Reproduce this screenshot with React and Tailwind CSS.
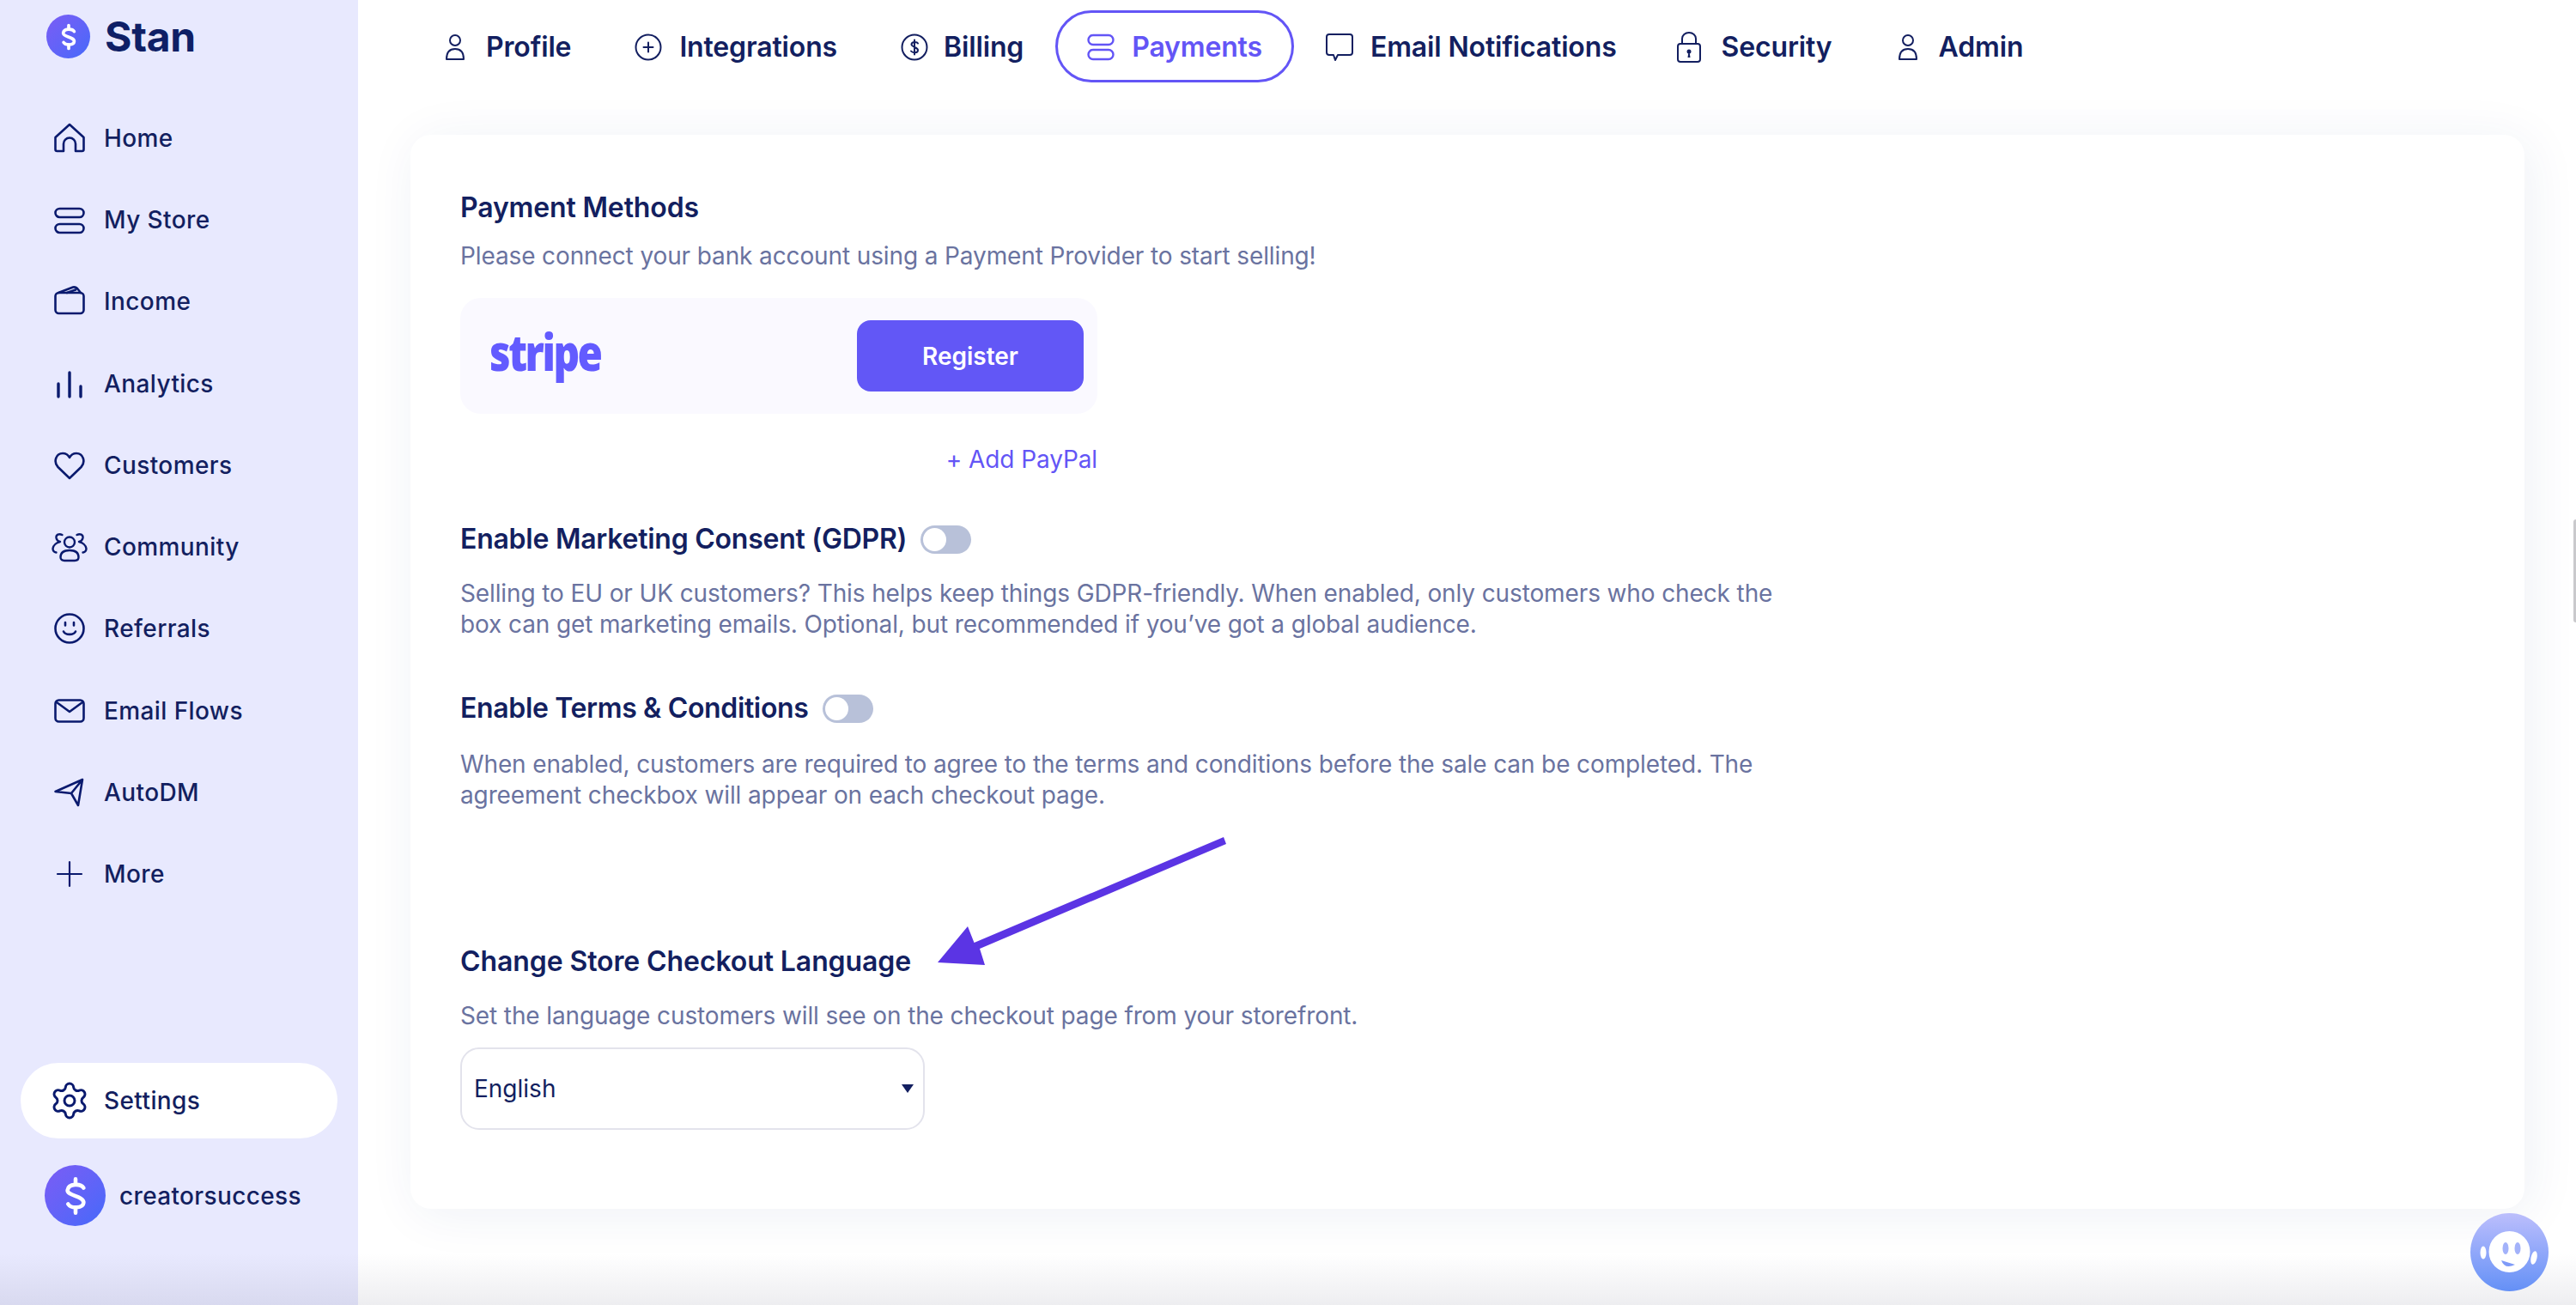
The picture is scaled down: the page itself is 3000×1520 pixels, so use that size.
import React from "react";
import { Settings } from "lucide-react";

const Ic = ({ children, w = 36, h = 36, sw = 2.6, className = "" }) => (
  <svg width={w} height={h} viewBox={`0 0 ${w} ${h}`} fill="none" stroke="currentColor" strokeWidth={sw} strokeLinecap="round" strokeLinejoin="round" className={className}>{children}</svg>
);

const HomeI = () => <Ic><path d="M1.5 17 L18 2 L34.500 17 V31 a2 2 0 0 1-2 2 H25 V24.500 a7 7 0 0 0-14 0 V33 H3.500 a2 2 0 0 1-2-2 Z" /></Ic>;
const StoreI = () => <Ic><rect x="1.500" y="5" width="33" height="10" rx="5" /><rect x="1.500" y="23" width="33" height="10" rx="5" /></Ic>;
const WalletI = () => <Ic><rect x="1.500" y="8" width="33" height="24" rx="4" /><path d="M5 8 L22 1.500 Q25 1 27 3 L31 8 M15 8 L25 4.500" /></Ic>;
const BarsI = () => <Ic sw={3.4}><path d="M5 18 V33 M18 5 V33 M31 21 V33" /></Ic>;
const HeartI = () => <Ic><path d="M18 33 L4.500 20 C-1 14 2 4 10 4 C14 4 16.500 6 18 9 C19.500 6 22 4 26 4 C34 4 37 14 31.500 20 Z" /></Ic>;
const CommunityI = () => (
  <Ic w={42} h={36} sw={2.4}>
    <circle cx="21" cy="12.500" r="6" />
    <path d="M10.500 30 C10.500 24.500 15 22 21 22 C27 22 31.500 24.500 31.500 30 C31.500 33 29.500 34 27 34 H15 C12.500 34 10.500 33 10.500 30 Z" />
    <path d="M12.500 4 C8.500 2 5 4 5.500 7.500 C6 10 8 11.500 10 12 C6 13 2 16 1.500 20 C1.500 22 3 24 5.500 24.500" />
    <path d="M29.500 4 C33.500 2 37 4 36.500 7.500 C36 10 34 11.500 32 12 C36 13 40 16 40.500 20 C40.500 22 39 24 36.500 24.500" />
  </Ic>
);
const SmileI = () => <Ic><circle cx="18" cy="18" r="16.500" /><path d="M11 21.500 C13 26 23 26 25 21.500" /><path d="M13 11 V14.500 M23 11 V14.500" /></Ic>;
const MailI = () => <Ic><rect x="1.500" y="5.500" width="33" height="25" rx="4" /><path d="M3 8 L18 19 L33 8" /></Ic>;
const SendI = () => <Ic><path d="M1.500 17 L33 3 L28 33 L20 19 Z M20 19 L33 3" /></Ic>;
const PlusI = () => <Ic sw={2.2}><path d="M18 4 V32 M4 18 H32" /></Ic>;

const PersonT = () => <Ic w={24} h={34} sw={2}><circle cx="12" cy="9" r="6" /><path d="M2 31 C2 22 6 19 12 19 C18 19 22 22 22 31 Z" /></Ic>;
const PlusT = () => <Ic w={32} h={32} sw={2}><circle cx="16" cy="16" r="14.500" /><path d="M16 10.500 V21.500 M10.500 16 H21.500" /></Ic>;
const DollarT = () => <Ic w={32} h={32} sw={2}><circle cx="16" cy="16" r="14.500" /><path d="M20 11.500 C19 9.500 13 9 12.500 12.500 C12 16 20 15.500 20 19.500 C20 23 14 23 12 20.500 M16 7.500 V24.500" /></Ic>;
const StoreT = () => <Ic w={32} h={34} sw={2.400}><rect x="1.500" y="3" width="29" height="11" rx="5.500" /><rect x="1.500" y="20" width="29" height="11" rx="5.500" /></Ic>;
const ChatT = () => <Ic w={32} h={34} sw={2}><path d="M4 2 H28 a3 3 0 0 1 3 3 V23 a3 3 0 0 1-3 3 H14 L11 32 L9 26 H4 a3 3 0 0 1-3-3 V5 a3 3 0 0 1 3-3 Z" /></Ic>;
const LockT = () => (
  <svg width="28" height="36" viewBox="0 0 28 36" fill="none" stroke="currentColor" strokeWidth="2" strokeLinejoin="round">
    <rect x="1" y="14" width="26" height="21" rx="3" />
    <path d="M6 14 V8 a8 7 0 0 1 16 0 V14" />
    <circle cx="14" cy="23" r="2.500" fill="currentColor" stroke="none" />
    <path d="M12.500 30 L13.500 23 H14.500 L15.500 30 Z" fill="currentColor" stroke="none" />
  </svg>
);

const Logo = ({ size, icon, sw }) => (
  <div className="flex items-center justify-center rounded-full bg-gradient-to-br from-[#7a5cf5] to-[#4369fa] text-white shrink-0" style={{ width: size, height: size }}>
    <svg width={icon} height={icon} viewBox="0 0 24 24" fill="none" stroke="currentColor" strokeWidth={sw} strokeLinecap="round" strokeLinejoin="round">
      <path d="M16.500 7.500 C15 5 8 4.800 7.500 8.800 C7.200 12 16.800 12 16.500 15.800 C16.200 19 9.500 19.200 7.800 16.500" />
      <path d="M12 2.500 V5.500 M12 18.500 V21.500" />
    </svg>
  </div>
);

const nav = [
  ["Home", <HomeI />], ["My Store", <StoreI />], ["Income", <WalletI />], ["Analytics", <BarsI />],
  ["Customers", <HeartI />], ["Community", <CommunityI />], ["Referrals", <SmileI />],
  ["Email Flows", <MailI />], ["AutoDM", <SendI />], ["More", <PlusI />],
];

const tabs = [
  ["Profile", <PersonT />, "gap-[24px] pl-[35px] pr-[37px]"],
  ["Integrations", <PlusT />, "gap-[20px] px-[37px]"],
  ["Billing", <DollarT />, "gap-[18px] px-[37px]"],
  ["Payments", <StoreT />, "gap-[20px] px-[34px] border-[3px] border-[#6355f6] text-[#6355f6]"],
  ["Email Notifications", <ChatT />, "gap-[20px] px-[37px]"],
  ["Security", <LockT />, "gap-[24px] pl-[33px] pr-[37px]"],
  ["Admin", <PersonT />, "gap-[24px] pl-[39px] pr-[37px]"],
];

const Toggle = () => (
  <div className="flex items-center w-[59px] h-[33px] rounded-full bg-[#b8c1d9] pl-[3px]">
    <div className="w-[27px] h-[27px] rounded-full bg-white" />
  </div>
);

const H = ({ children, className = "tracking-[-0.15px]" }) => (
  <div className={`flex items-center gap-4 h-[40px] text-[32px] leading-[40px] font-semibold text-[#131f60] ${className}`}>{children}</div>
);
const P = ({ children, className = "" }) => (
  <p className={`text-[28px] leading-[36px] tracking-[-0.12px] text-[#6a73a0] ${className}`}>{children}</p>
);

export default function App() {
  return (
    <div className="relative flex w-[3000px] h-[1520px] overflow-hidden bg-white font-['Inter',sans-serif]">
      <aside className="flex flex-col w-[417px] shrink-0 bg-[#e8e9fe] text-[#131f60]">
        <div className="flex items-center h-[85px] pl-[54px] gap-[17px]">
          <Logo size={51} icon={34} sw={2.6} />
          <span className="text-[48px] leading-none font-bold tracking-[-0.3px] text-[#0f1f66]">Stan</span>
        </div>
        <nav className="mt-[28px] flex flex-col">
          {nav.map(([t, i]) => (
            <div key={t} className="flex items-center h-[95.3px] text-[28px] font-medium tracking-[0.4px]">
              <div className="flex justify-center w-[121px] pl-[42px] pr-[2px] text-[#0a1a6e]">{i}</div>
              <span className="leading-none">{t}</span>
            </div>
          ))}
        </nav>
        <div className="mt-auto mx-[24px] flex items-center h-[88px] w-[369px] rounded-full bg-white text-[28px] font-medium tracking-[0.4px]">
          <div className="flex justify-center w-[97px] pl-[18px] pr-[2px] text-[#0a1a6e]"><Settings size={48} strokeWidth={1.5} /></div>
          <span>Settings</span>
        </div>
        <div className="mt-[31px] mb-[92px] ml-[52px] flex items-center gap-[16px]">
          <Logo size={71} icon={50} sw={2.2} />
          <span className="text-[28px] font-medium tracking-[0.35px]">creatorsuccess</span>
        </div>
      </aside>

      <main className="flex flex-col flex-1 min-w-0 bg-white pl-[61px]">
        <div className="flex items-center mt-[12px] h-[84px] ml-[5px] text-[32px] font-semibold tracking-[-0.15px] text-[#131f60]">
          {tabs.map(([t, i, cls]) => (
            <div key={t} className={`flex items-center h-[84px] pt-[2px] rounded-full whitespace-nowrap ${cls}`}>
              <span>{i}</span>
              <span>{t}</span>
            </div>
          ))}
        </div>

        <section className="mt-[61px] w-[2462px] h-[1251px] rounded-[24px] bg-white pl-[58px] pt-[65px] shadow-[6px_6px_60px_rgba(30,50,130,0.07)]">
          <H>Payment Methods</H>
          <P className="mt-[18px]">Please connect your bank account using a Payment Provider to start selling!</P>
          <div className="mt-[31px] flex items-center justify-between w-[742px] h-[135px] rounded-[24px] bg-[#faf9ff] pl-[34px] pr-[16px]">
            <span className="-mt-[10px] origin-left scale-x-[0.82] text-[58px] leading-none font-extrabold tracking-[-3px] text-[#635bff] font-['Open_Sans',sans-serif]">stripe</span>
            <button className="w-[264px] h-[83px] rounded-[16px] bg-[#6257f6] text-white text-[28px] font-semibold">Register</button>
          </div>
          <div className="mt-[35px] w-[742px] text-right text-[28px] leading-[36px] tracking-[-0.1px] text-[#6355f6]">+ Add PayPal</div>

          <H className="mt-[55px] tracking-[-0.25px]">Enable Marketing Consent (GDPR)<Toggle /></H>
          <P className="mt-[25px]">Selling to EU or UK customers? This helps keep things GDPR-friendly. When enabled, only customers who check the<br />box can get marketing emails. Optional, but recommended if you’ve got a global audience.</P>

          <H className="mt-[60px] tracking-[-0.35px]">Enable Terms &amp; Conditions<Toggle /></H>
          <P className="mt-[27px]">When enabled, customers are required to agree to the terms and conditions before the sale can be completed. The<br />agreement checkbox will appear on each checkout page.</P>

          <H className="mt-[156px] tracking-[-0.1px]">Change Store Checkout Language</H>
          <P className="mt-[25px]">Set the language customers will see on the checkout page from your storefront.</P>
          <div className="mt-[19px] flex items-center justify-between w-[541px] h-[96px] rounded-[22px] border-2 border-[#e3e3ec] pl-[14px] pr-[11px] text-[28px] text-[#131f60]">
            <span>English</span>
            <svg width="14" height="10" viewBox="0 0 14 10"><path d="M0 0 H14 L7 10 Z" fill="#131f60" /></svg>
          </div>
        </section>
      </main>

      <div className="pointer-events-none absolute inset-x-0 bottom-0 h-[60px] bg-gradient-to-t from-[rgba(60,60,90,0.09)] to-transparent" />
      <div className="pointer-events-none absolute right-0 top-[605px] w-[3px] h-[120px] rounded-l-full bg-[#c9c9cc]" />

      <svg className="absolute left-[1085px] top-[970px]" width="350" height="160" viewBox="0 0 350 160">
        <path d="M340 5 L343 13 L56 135 L62 154 L7 151 L42 109 L49.500 128 Z" fill="#5b34e4" />
      </svg>

      <div className="absolute left-[2877px] top-[1413px] w-[91px] h-[91px] rounded-full bg-gradient-to-b from-[#bcbefc] to-[#6490f6]">
        <svg width="91" height="91" viewBox="0 0 91 91">
          <ellipse cx="45.500" cy="45" rx="24" ry="24" fill="white" />
          <ellipse cx="15" cy="46" rx="3.500" ry="7.500" fill="white" />
          <ellipse cx="74" cy="52" rx="3.500" ry="8" fill="white" transform="rotate(12 74 52)" />
          <ellipse cx="41" cy="41" rx="3.500" ry="7" fill="#a3b2fa" />
          <ellipse cx="55" cy="41" rx="3.500" ry="7" fill="#a3b2fa" />
          <path d="M36 55 L52 60 Q40 66 36 55 Z" fill="#7f9bf8" />
        </svg>
      </div>
    </div>
  );
}
